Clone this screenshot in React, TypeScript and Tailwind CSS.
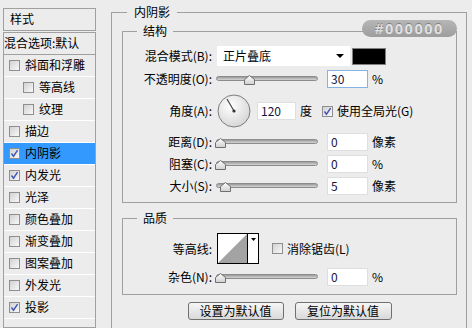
import React from 'react'

const layers = [
    { label: '斜面和浮雕' },
    { label: '等高线', indent: true },
    { label: '纹理', indent: true },
    { label: '描边' },
    { label: '内阴影', checked: true, active: true },
    { label: '内发光', checked: true },
    { label: '光泽' },
    { label: '颜色叠加' },
    { label: '渐变叠加' },
    { label: '图案叠加' },
    { label: '外发光' },
    { label: '投影', checked: true },
]

function Check({ checked }: { checked?: boolean }) {
    return (
        <span className="flex h-[11px] w-[11px] shrink-0 items-center justify-center border border-[#8f8f8f] bg-[linear-gradient(135deg,#d2d2d2,#f8f8f8)]">
            {checked && (
                <svg width="9" height="9" viewBox="0 0 9 9">
                    <path d="M1.5 4.5 L3.5 7.2 L7.6 1.2" fill="none" stroke="#3f55b3" strokeWidth="1.4" />
                </svg>
            )}
        </span>
    )
}

function Slider({ thumb }: { thumb: number }) {
    return (
        <div className="relative ml-[4px] h-[18px] w-[102px] shrink-0">
            <div className="mt-[6px] h-[5px] rounded-full border border-[#8c8c8c] bg-[linear-gradient(#9a9a9a,#d6d6d6)]" />
            <svg className="absolute top-[5px]" style={{ left: thumb }} width="11" height="10" viewBox="0 0 11 10">
                <defs>
                    <linearGradient id="th" x1="0" y1="0" x2="0" y2="1">
                        <stop offset="0" stopColor="#ffffff" />
                        <stop offset="1" stopColor="#cfcfcf" />
                    </linearGradient>
                </defs>
                <polygon points="5.5,0.5 10.5,4.5 10.5,9.5 0.5,9.5 0.5,4.5" fill="url(#th)" stroke="#6f6f6f" />
            </svg>
        </div>
    )
}

function Field({ value, focus, unit, w = 'w-[41px]', ml = 'ml-[9px]' }: { value: string; focus?: boolean; unit?: string; w?: string; ml?: string }) {
    return (
        <>
            <div className={`${ml} ${w} flex h-[18px] shrink-0 items-center border bg-white pl-[3px] text-[#14143c] ${focus ? 'border-[#86b2e4]' : 'border-[#dedede]'}`}>
                {value}
            </div>
            {unit && <span className="ml-[4px]">{unit}</span>}
        </>
    )
}

function Label({ text }: { text: string }) {
    return <span className="w-[89px] shrink-0 text-right">{text}</span>
}

export default function App() {
    return (
        <div className="flex h-[328px] w-[472px] overflow-hidden bg-[#ececec] font-['Noto_Sans_CJK_SC',sans-serif] text-[12px] leading-[16px] text-black">
            {/* left list */}
            <div className="ml-[3px] mt-[8px] flex w-[93px] shrink-0 flex-col">
                <div className="flex h-[23px] items-center border border-[#a0a0a0] pl-[6px]">样式</div>
                <div className="mt-[1px] h-[300px] border border-[#a0a0a0]">
                    <div className="flex h-[22px] items-center whitespace-nowrap border-b border-[#a0a0a0]">混合选项:默认</div>
                    {layers.map((l) => (
                        <div
                            key={l.label}
                            className={`flex h-[22px] items-center gap-[5px] border-b border-white ${l.indent ? 'pl-[19px]' : 'pl-[5px]'} ${l.active ? 'bg-[#3399ff]' : ''}`}
                        >
                            <Check checked={l.checked} />
                            <span>{l.label}</span>
                        </div>
                    ))}
                </div>
            </div>

            {/* right panel */}
            <div className="ml-[15px] mt-[4px] w-[356px] shrink-0">
                <fieldset className="border border-[#a0a0a0] pb-[40px] pl-[10px] pr-[9px]">
                    <legend className="ml-[5px] px-[7px]">内阴影</legend>

                    <div className="relative mt-[3px]">
                        <fieldset className="border border-[#a0a0a0] pb-[7px]">
                            <legend className="ml-[14px] px-[6px]">结构</legend>

                            <div className="mt-[7px] flex h-[20px] items-center">
                                <Label text="混合模式(B):" />
                                <div className="ml-[5px] flex h-[20px] w-[133px] items-center justify-between bg-white pl-[6px] pr-[6px]">
                                    <span>正片叠底</span>
                                    <svg width="8" height="4" viewBox="0 0 8 4">
                                        <polygon points="0,0 8,0 4,4" fill="#000" />
                                    </svg>
                                </div>
                                <div className="ml-[2px] h-[17px] w-[34px] border border-[#808080] bg-black" />
                            </div>

                            <div className="mt-[4px] flex h-[18px] items-center">
                                <Label text="不透明度(O):" />
                                <Slider thumb={28} />
                                <Field value="30" focus unit="%" />
                            </div>

                            <div className="mt-[6px] flex h-[34px] items-center">
                                <Label text="角度(A):" />
                                <svg className="ml-[5px] shrink-0" width="34" height="34" viewBox="0 0 34 34">
                                    <defs>
                                        <radialGradient id="dial" cx="0.4" cy="0.35" r="0.7">
                                            <stop offset="0" stopColor="#ffffff" />
                                            <stop offset="1" stopColor="#d4d4d4" />
                                        </radialGradient>
                                    </defs>
                                    <circle cx="17" cy="17" r="16" fill="url(#dial)" stroke="#7d7d7d" />
                                    <line x1="17" y1="17" x2="10" y2="5" stroke="#444" strokeWidth="1.2" />
                                    <circle cx="17" cy="17" r="1.6" fill="#333" />
                                </svg>
                                <Field value="120" ml="ml-[6px]" w="w-[39px]" unit="度" />
                                <span className="ml-[10px]"><Check checked /></span>
                                <span className="ml-[4px]">使用全局光(G)</span>
                            </div>

                            <div className="mt-[5px] flex h-[18px] items-center">
                                <Label text="距离(D):" />
                                <Slider thumb={-1} />
                                <Field value="0" unit="像素" />
                            </div>

                            <div className="mt-[4px] flex h-[18px] items-center">
                                <Label text="阻塞(C):" />
                                <Slider thumb={-1} />
                                <Field value="0" unit="%" />
                            </div>

                            <div className="mt-[4px] flex h-[18px] items-center">
                                <Label text="大小(S):" />
                                <Slider thumb={4} />
                                <Field value="5" unit="像素" />
                            </div>
                        </fieldset>

                        <div className="absolute right-0 top-[-3px] h-[17px] w-[95px] rounded-full bg-[linear-gradient(#b6b6b6,#9d9d9d)] text-center font-['Liberation_Sans',sans-serif] text-[15px] font-bold leading-[17px] tracking-[1.5px] text-[#e2e2e2] [text-shadow:0_-1px_0_rgba(0,0,0,0.3)]">
                            #000000
                        </div>
                    </div>

                    <fieldset className="mt-[7px] border border-[#a0a0a0] pb-[8px]">
                        <legend className="ml-[14px] px-[6px]">品质</legend>

                        <div className="mt-[7px] flex h-[31px] items-center">
                            <Label text="等高线:" />
                            <div className="ml-[5px] flex h-[31px] w-[42px] shrink-0 border border-black bg-white">
                                <svg width="29" height="29" viewBox="0 0 29 29">
                                    <polygon points="0,29 29,0 29,29" fill="#a3a3a3" />
                                </svg>
                                <div className="flex flex-1 justify-center border-l border-black pt-[4px]">
                                    <svg width="5" height="3" viewBox="0 0 5 3">
                                        <polygon points="0,0 5,0 2.5,3" fill="#000" />
                                    </svg>
                                </div>
                            </div>
                            <span className="ml-[13px]"><Check /></span>
                            <span className="ml-[4px]">消除锯齿(L)</span>
                        </div>

                        <div className="mt-[4px] flex h-[18px] items-center">
                            <Label text="杂色(N):" />
                            <Slider thumb={-1} />
                            <Field value="0" unit="%" />
                        </div>
                    </fieldset>

                    <div className="mt-[7px] flex justify-center gap-[11px]">
                        <button className="h-[18px] w-[96px] rounded-[3px] border border-[#707070] bg-[linear-gradient(#f6f6f6,#d9d9d9)] text-[12px] leading-[16px]">
                            设置为默认值
                        </button>
                        <button className="h-[18px] w-[97px] rounded-[3px] border border-[#707070] bg-[linear-gradient(#f6f6f6,#d9d9d9)] text-[12px] leading-[16px]">
                            复位为默认值
                        </button>
                    </div>
                </fieldset>
            </div>
        </div>
    )
}
